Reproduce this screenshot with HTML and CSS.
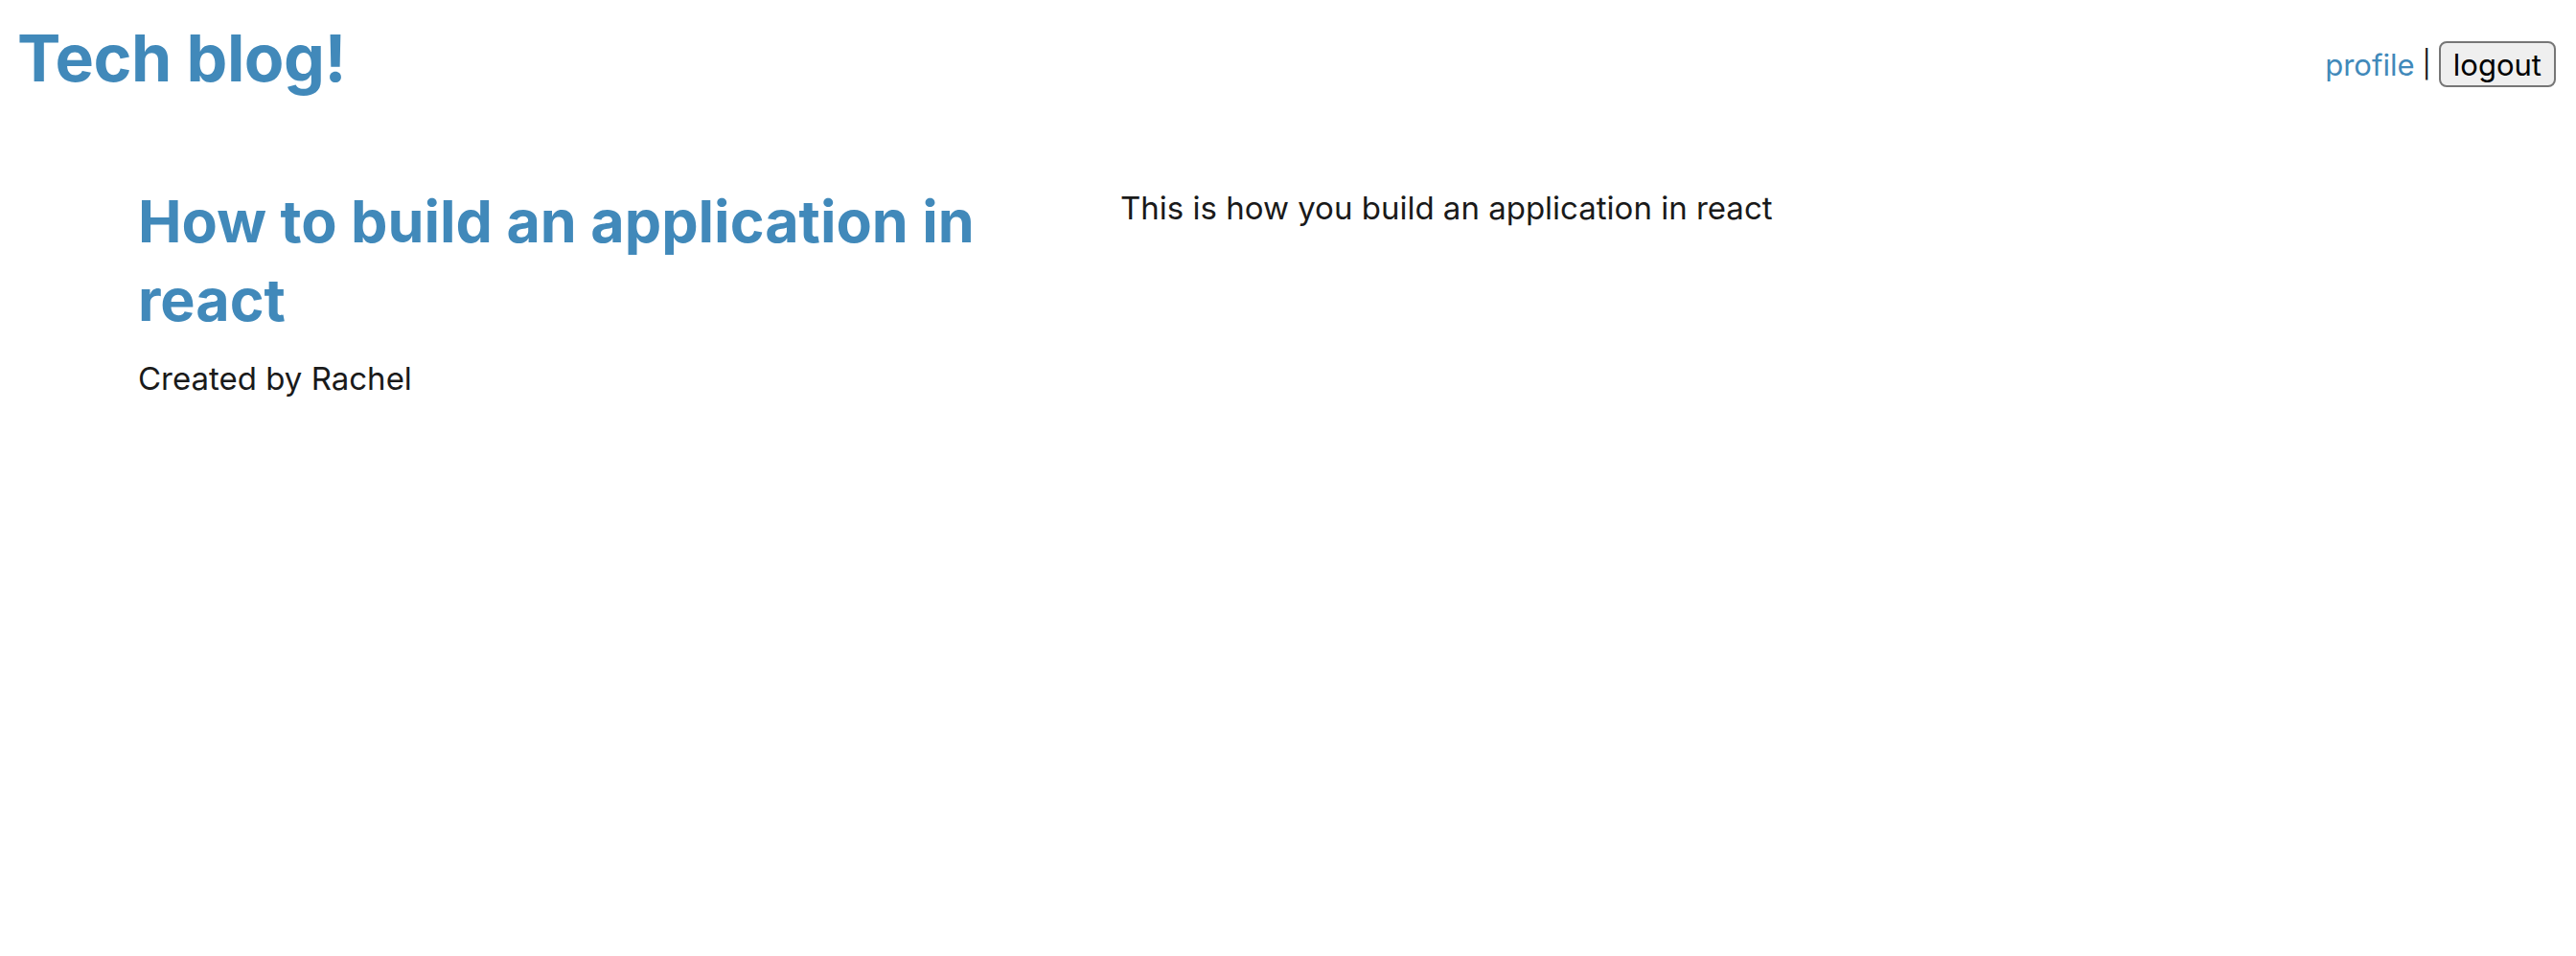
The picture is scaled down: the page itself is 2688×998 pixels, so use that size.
FILE: index.html
```html
<!DOCTYPE html>
<html lang="en">
<head>
<meta charset="utf-8">
<title>Tech blog!</title>
<link rel="stylesheet" href="styles.css">
</head>
<body>
<header class="topbar">
  <h1 class="brand">Tech blog!</h1>
  <nav class="nav">
    <a class="nav-link" href="#">profile</a>
    <span class="nav-sep">|</span>
    <button class="nav-btn" type="button">logout</button>
  </nav>
</header>
<main class="post">
  <div class="post-head">
    <h2 class="post-title">How to build an application in react</h2>
    <p class="post-author">Created by Rachel</p>
  </div>
  <div class="post-body">
    <p class="post-text">This is how you build an application in react</p>
  </div>
</main>
</body>
</html>
```
FILE: styles.css
```css
html, body {
  margin: 0;
  padding: 0;
  background: #ffffff;
}
body {
  font-family: Inter, "Noto Sans", sans-serif;
  color: #1a1a1a;
}
.topbar {
  display: flex;
  justify-content: space-between;
  align-items: flex-start;
  padding: 19px 21px 0 18px;
}
.brand {
  margin: 0;
  font-size: 68px;
  font-weight: 700;
  line-height: normal;
  color: #4189ba;
  letter-spacing: -0.5px;
}
.nav {
  display: flex;
  align-items: center;
  gap: 8px;
  margin-top: 24px;
  font-size: 31px;
}
.nav-link {
  color: #4189ba;
  text-decoration: none;
}
.nav-sep {
  color: #1a1a1a;
  font-size: 28px;
}
.nav-btn {
  font-family: inherit;
  font-size: 31px;
  color: #000;
  background: #efefef;
  border: 2px solid #767676;
  border-radius: 8px;
  padding: 2px 13px;
  height: 48px;
  line-height: 1;
}
.post {
  display: grid;
  grid-template-columns: 960px 1fr;
  column-gap: 65px;
  padding: 0 0 0 144px;
  margin-top: 89px;
}
.post-title {
  margin: 0;
  font-size: 61px;
  font-weight: 700;
  line-height: 82px;
  color: #4189ba;
}
.post-author {
  margin: 21px 0 0;
  font-size: 33px;
  line-height: normal;
}
.post-text {
  margin: 7px 0 0;
  font-size: 33px;
  line-height: normal;
}
```
